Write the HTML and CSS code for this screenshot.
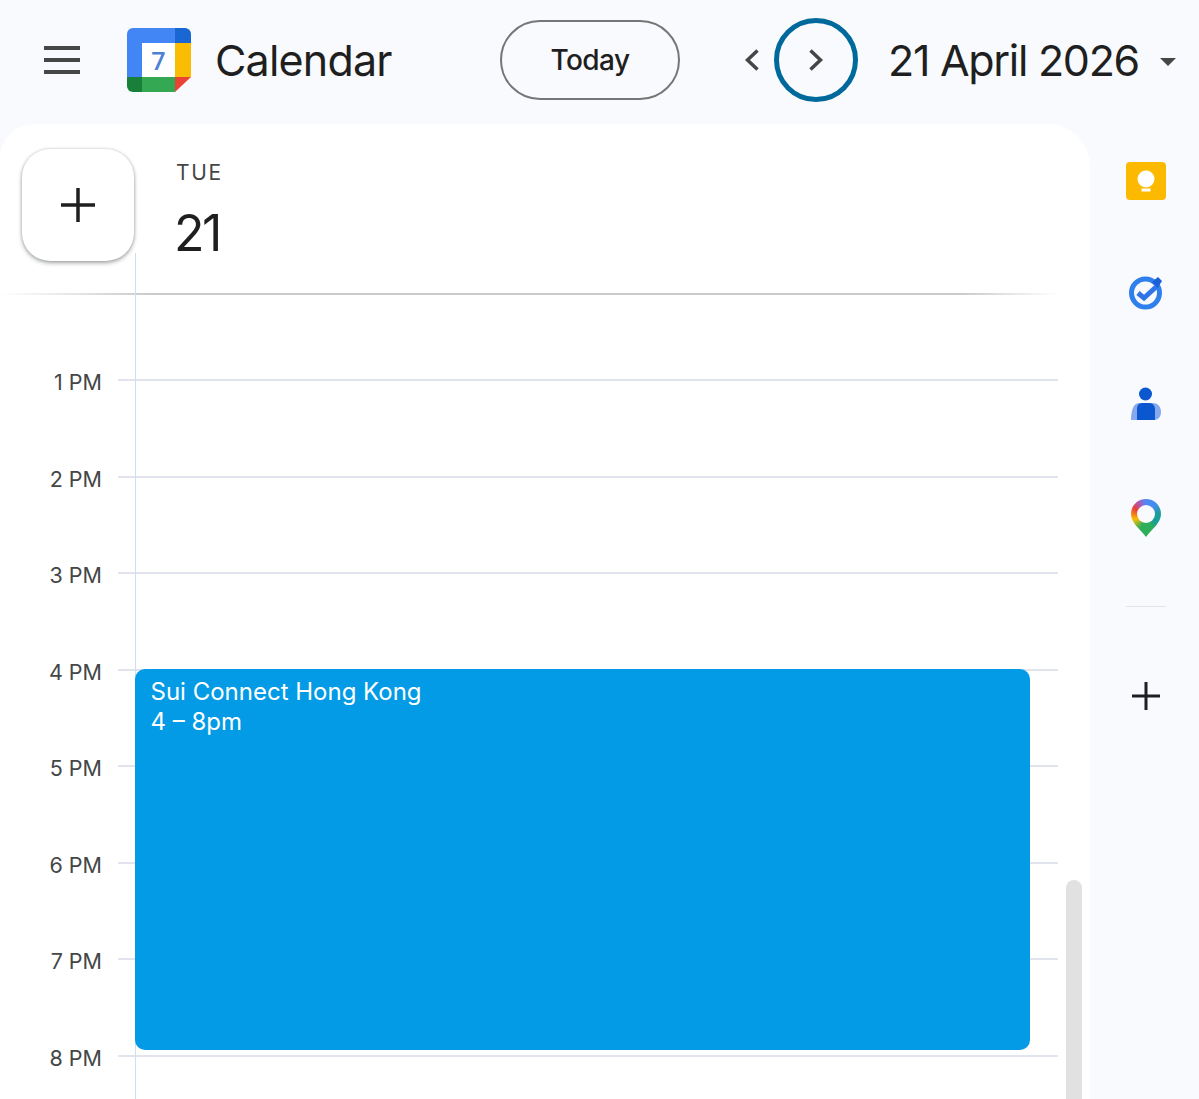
FILE: index.html
```html
<!DOCTYPE html>
<html lang="en">

<head>
  <meta charset="UTF-8">
  <meta name="viewport" content="width=device-width, initial-scale=1.0">
  <title>Calendar</title>
  <link rel="stylesheet" href="styles.css">
</head>

<body>
  <header class="topbar">
    <div class="menu-icon"><span></span><span></span><span></span></div>
    <svg class="logo" viewBox="0 0 64 64" width="64" height="64">
      <path fill="#4285f4" d="M48 0H6a6 6 0 0 0-6 6v43h15V15h33z" />
      <path fill="#1967d2" d="M48 0h10a6 6 0 0 1 6 6v9H48z" />
      <rect fill="#fff" x="15" y="15" width="33" height="34" />
      <rect fill="#fbbc04" x="48" y="15" width="16" height="34" />
      <rect fill="#34a853" x="15" y="49" width="33" height="15" />
      <path fill="#188038" d="M0 49h15v15H6a6 6 0 0 1-6-6z" />
      <path fill="#ea4335" d="M48 49h16L48 64z" />
      <text class="logo-day" x="31.5" y="42" text-anchor="middle">7</text>
    </svg>
    <span class="app-name">Calendar</span>
    <button class="today-btn">Today</button>
    <svg class="chevron" viewBox="0 0 16 24" width="16" height="24">
      <path d="M13.5 2.5 3.5 12l10 9.500" />
    </svg>
    <div class="next-ring">
      <svg class="chevron" viewBox="0 0 16 24" width="16" height="24">
        <path d="M2.500 2.500 12.500 12l-10 9.500" />
      </svg>
    </div>
    <span class="date-title">21 April 2026</span>
    <span class="caret"></span>
  </header>

  <div class="content">
    <main class="panel">
      <button class="create-btn">
        <svg viewBox="0 0 34 34" width="34" height="34">
          <path d="M17 0v34M0 17h34" />
        </svg>
      </button>

      <div class="day-head">
        <div class="day-name">TUE</div>
        <div class="day-num">21</div>
      </div>

      <div class="timeline">
        <div class="hour"><span class="hour-label">1 PM</span><span class="hour-line"></span></div>
        <div class="hour"><span class="hour-label">2 PM</span><span class="hour-line"></span></div>
        <div class="hour"><span class="hour-label">3 PM</span><span class="hour-line"></span></div>
        <div class="hour"><span class="hour-label">4 PM</span><span class="hour-line"></span></div>
        <div class="hour"><span class="hour-label">5 PM</span><span class="hour-line"></span></div>
        <div class="hour"><span class="hour-label">6 PM</span><span class="hour-line"></span></div>
        <div class="hour"><span class="hour-label">7 PM</span><span class="hour-line"></span></div>
        <div class="hour"><span class="hour-label">8 PM</span><span class="hour-line"></span></div>

        <div class="event">
          <div class="event-title">Sui Connect Hong Kong</div>
          <div class="event-time">4 – 8pm</div>
        </div>
      </div>

      <div class="scroll-thumb"></div>
    </main>

    <aside class="side">
      <div class="side-item">
        <svg viewBox="0 0 40 40" width="40" height="40">
          <rect fill="#fbb900" width="40" height="38" y="1" rx="4" />
          <circle fill="#fff" cx="20" cy="18" r="8.500" />
          <rect fill="#fff" x="16" y="22" width="8" height="3" />
          <rect fill="#fff" x="15.500" y="27.500" width="9" height="3" />
        </svg>
      </div>
      <div class="side-item">
        <svg viewBox="0 0 36 36" width="36" height="36">
          <circle fill="none" stroke="#2f80ed" stroke-width="5" cx="17.500" cy="18" r="14" />
          <path fill="none" stroke="#2f74e8" stroke-width="5" d="M10 18l6 5 12-11" />
          <path fill="#1a5fd8" d="M24 7l6-5 4 4-4.500 7z" />
        </svg>
      </div>
      <div class="side-item">
        <svg viewBox="0 0 30 36" width="30" height="36">
          <circle fill="#0b57d0" cx="14.500" cy="7" r="6.500" />
          <path fill="#86a9ee" d="M8 16h14c5 0 8 4 8 9 0 5-3 8-7 8H0c0-8 2-17 8-17z" />
          <path fill="#0b57d0" d="M12 16h6c4 0 6 3 6 7v10H6V22c0-4 2-6 6-6z" />
        </svg>
      </div>
      <div class="side-item">
        <div class="map-pin"><span></span></div>
      </div>
      <div class="side-divider"></div>
      <svg class="side-plus" viewBox="0 0 28 28" width="28" height="28">
        <path d="M14 0v28M0 14h28" />
      </svg>
    </aside>
  </div>
</body>

</html>
```

FILE: styles.css
```css
* {
  box-sizing: border-box;
}

body {
  margin: 0;
  height: 1099px;
  overflow: hidden;
  background-color: #f8fafd;
  color: #1f1f1f;
  font-family: "Inter", "Liberation Sans", sans-serif;
}

button {
  font-family: inherit;
  color: inherit;
  background: none;
  cursor: pointer;
}

/* top bar */
.topbar {
  height: 124px;
  display: flex;
  align-items: center;
  padding-left: 44px;
  padding-bottom: 4px;
}

.menu-icon {
  width: 36px;
  display: flex;
  flex-direction: column;
  gap: 8px;
}

.menu-icon span {
  height: 4px;
  background-color: #444746;
}

.logo {
  margin-left: 47px;
}

.logo-day {
  font-size: 25px;
  font-weight: 600;
  fill: #4a80d8;
  font-family: "Open Sans", sans-serif;
}

.app-name {
  margin-left: 24px;
  width: 180px;
  font-size: 43px;
  letter-spacing: -0.8px;
  white-space: nowrap;
}

.today-btn {
  margin-left: 105px;
  width: 180px;
  height: 80px;
  border: 2px solid #747775;
  border-radius: 40px;
  font-size: 28px;
  font-weight: 500;
  letter-spacing: -0.6px;
}

.chevron {
  fill: none;
  stroke: #444746;
  stroke-width: 3.500;
}

.topbar > .chevron {
  margin-left: 64px;
}

.next-ring {
  width: 84px;
  height: 84px;
  margin-left: 14px;
  border: 5px solid #00699b;
  border-radius: 50%;
  display: flex;
  align-items: center;
  justify-content: center;
}

.date-title {
  margin-left: 30px;
  font-size: 43px;
  letter-spacing: -1.3px;
  white-space: nowrap;
}

.caret {
  margin-left: 21px;
  margin-top: 3px;
  border-top: 8px solid #444746;
  border-left: 8px solid transparent;
  border-right: 8px solid transparent;
}

/* main area */
.content {
  display: flex;
  height: 975px;
}

.panel {
  position: relative;
  width: 1090px;
  background-color: #fff;
  border-radius: 34px 42px 0 0;
  overflow: hidden;
}

.create-btn {
  position: absolute;
  left: 22px;
  top: 25px;
  width: 112px;
  height: 112px;
  border: none;
  border-radius: 28px;
  background-color: #fff;
  box-shadow: 0 2px 4px rgba(60, 64, 67, 0.45), 0 0 3px rgba(60, 64, 67, 0.2);
  display: flex;
  align-items: center;
  justify-content: center;
}

.create-btn path {
  stroke: #1f1f1f;
  stroke-width: 3.500;
}

.day-head {
  height: 171px;
  padding-left: 176px;
  padding-top: 36px;
  border-bottom: 2px solid;
  border-image: linear-gradient(to right, #fff, #c8cacb 14%, #c8cacb 88%, #fff 97%, #fff) 1;
}

.day-name {
  font-size: 21px;
  line-height: 26px;
  letter-spacing: 1.6px;
  color: #444746;
}

.day-num {
  margin-top: 16px;
  margin-left: -2px;
  font-size: 50px;
  line-height: 62px;
  letter-spacing: -2.5px;
}

.timeline {
  position: relative;
  padding-top: 84px;
  padding-right: 32px;
}

/* day column rule */
.timeline::before {
  content: "";
  position: absolute;
  left: 135px;
  top: -42px;
  bottom: 0;
  width: 1px;
  background-color: #d0dff0;
}

.hour {
  height: 96.500px;
  display: flex;
}

.hour-label {
  width: 102px;
  margin-top: -9px;
  height: 24px;
  line-height: 24px;
  text-align: right;
  font-size: 21.500px;
  color: #444746;
}

.hour-line {
  flex: 1;
  margin-left: 16px;
  height: 2px;
  background-color: #e1e4ec;
}

.event {
  position: absolute;
  left: 135px;
  top: 374px;
  width: 895px;
  height: 381px;
  padding: 8px 15.500px;
  border-radius: 10px;
  background-color: #039be5;
  color: #fff;
  font-size: 24px;
  line-height: 30px;
}

.scroll-thumb {
  position: absolute;
  left: 1066px;
  top: 756px;
  bottom: 0;
  width: 16px;
  border-radius: 8px 8px 0 0;
  background-color: #e1e1e1;
}

/* right side apps */
.side {
  flex: 1;
  padding-top: 1px;
  padding-left: 3px;
  display: flex;
  flex-direction: column;
  align-items: center;
}

.side-item {
  height: 112px;
  display: flex;
  align-items: center;
  justify-content: center;
}

.map-pin {
  position: relative;
  width: 30px;
  height: 38px;
  margin-top: 2px;
  background: conic-gradient(#4a8af4 0deg 30deg, #1a9e9a 70deg, #1a9e9a 110deg, #2fae5a 150deg, #2fae5a 210deg, #fbbc04 265deg, #ea4335 310deg, #a05fc8 340deg, #4a8af4 360deg);
  clip-path: path("M15 0C23.300 0 30 6.500 30 15 30 24 21 30 15 38 9 30 0 24 0 15 0 6.500 6.700 0 15 0z");
}

.map-pin span {
  position: absolute;
  left: 6px;
  top: 6px;
  width: 18px;
  height: 18px;
  border-radius: 50%;
  background-color: #f8fafd;
}

.side-divider {
  width: 40px;
  height: 1px;
  margin-top: 33px;
  background-color: #e1e3e6;
}

.side-plus {
  margin-top: 75px;
  flex-shrink: 0;
}

.side-plus path {
  stroke: #1f1f1f;
  stroke-width: 3;
}
```
